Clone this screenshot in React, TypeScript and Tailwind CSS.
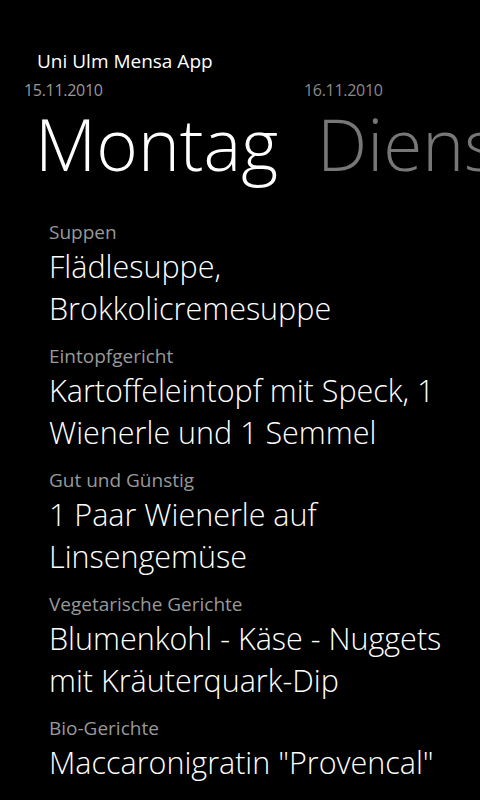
const meals = [
  { label: "Suppen", lines: ["Flädlesuppe,", "Brokkolicremesuppe"] },
  { label: "Eintopfgericht", lines: ["Kartoffeleintopf mit Speck, 1", "Wienerle und 1 Semmel"] },
  { label: "Gut und Günstig", lines: ["1 Paar Wienerle auf", "Linsengemüse"] },
  { label: "Vegetarische Gerichte", lines: ["Blumenkohl - Käse - Nuggets", "mit Kräuterquark-Dip"] },
  { label: "Bio-Gerichte", lines: ['Maccaronigratin "Provencal"'] },
];

export default function App() {
  return (
    <div className="w-[480px] h-[800px] bg-black text-white overflow-hidden font-['Open_Sans',sans-serif]">
      <div className="pl-[37px] pt-[49px] text-[19px] leading-[24px] whitespace-nowrap">Uni Ulm Mensa App</div>

      {/* pivot headers */}
      <div className="flex mt-[6px] whitespace-nowrap">
        <div className="flex flex-col w-[283px] shrink-0">
          <span className="pl-[24px] text-[16px] leading-[22px] tracking-[-0.3px] text-[#999]">15.11.2010</span>
          <span className="pl-[35px] mt-[3px] text-[71px] leading-[80px] font-light">Montag</span>
        </div>
        <div className="flex flex-col shrink-0">
          <span className="pl-[21px] text-[16px] leading-[22px] tracking-[-0.3px] text-[#8a8a8a]">16.11.2010</span>
          <span className="pl-[34px] mt-[3px] text-[71px] leading-[80px] font-light text-[#777]">Dienstag</span>
        </div>
      </div>

      <div className="pl-[49px] mt-[36px]">
        {meals.map((m) => (
          <div key={m.label} className="mb-[15px]">
            <div className="text-[19px] leading-[25px] text-[#999]">{m.label}</div>
            {m.lines.map((l) => (
              <div key={l} className="text-[30.5px] leading-[42px] font-light whitespace-nowrap">
                {l}
              </div>
            ))}
          </div>
        ))}
      </div>
    </div>
  );
}
